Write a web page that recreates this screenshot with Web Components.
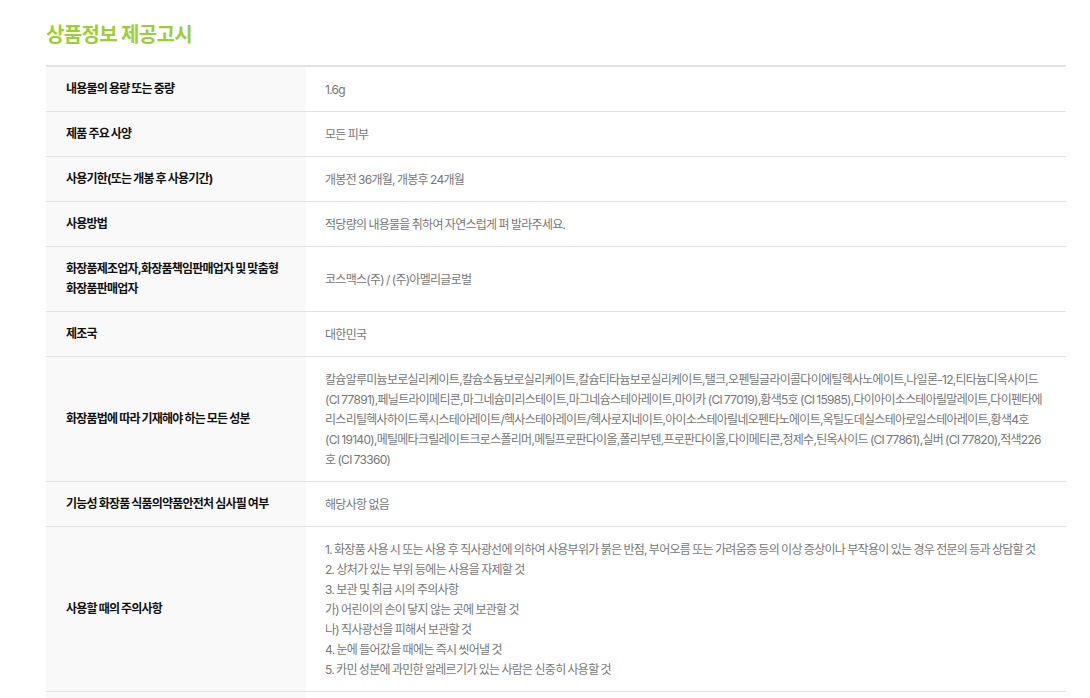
<!DOCTYPE html>
<html lang="ko">
<head>
<meta charset="utf-8">
<title>상품정보 제공고시</title>
<style>
  html, body{ margin: 0; height: 698px; overflow: hidden; background: #fff; }
  body{ font-family: Inter, "Noto Sans CJK KR", sans-serif; }
</style>
</head>
<body>
<notice-section heading="상품정보 제공고시">
  <notice-row label="내용물의 용량 또는 중량">1.6g</notice-row>
  <notice-row label="제품 주요 사양">모든 피부</notice-row>
  <notice-row label="사용기한(또는 개봉 후 사용기간)">개봉전 36개월, 개봉후 24개월</notice-row>
  <notice-row label="사용방법">적당량의 내용물을 취하여 자연스럽게 펴 발라주세요.</notice-row>
  <notice-row label="화장품제조업자,화장품책임판매업자 및 맞춤형 화장품판매업자">코스맥스(주) / (주)아멜리글로벌</notice-row>
  <notice-row label="제조국">대한민국</notice-row>
  <notice-row label="화장품법에 따라 기재해야 하는 모든 성분">칼슘알루미늄보로실리케이트,칼슘소듐보로실리케이트,칼슘티타늄보로실리케이트,탤크,오펜틸글라이콜다이에틸헥사노에이트,나일론-12,티타늄디옥사이드<br>(CI 77891),페닐트라이메티콘,마그네슘미리스테이트,마그네슘스테아레이트,마이카 (CI 77019),황색5호 (CI 15985),다이아이소스테아릴말레이트,다이펜타에<br>리스리틸헥사하이드록시스테아레이트/헥사스테아레이트/헥사로지네이트,아이소스테아릴네오펜타노에이트,옥틸도데실스테아로일스테아레이트,황색4호<br>(CI 19140),메틸메타크릴레이트크로스폴리머,메틸프로판다이올,폴리부텐,프로판다이올,다이메티콘,정제수,틴옥사이드 (CI 77861),실버 (CI 77820),적색226<br>호 (CI 73360)</notice-row>
  <notice-row label="기능성 화장품 식품의약품안전처 심사필 여부">해당사항 없음</notice-row>
  <notice-row label="사용할 때의 주의사항">1. 화장품 사용 시 또는 사용 후 직사광선에 의하여 사용부위가 붉은 반점, 부어오름 또는 가려움증 등의 이상 증상이나 부작용이 있는 경우 전문의 등과 상담할 것<br>2. 상처가 있는 부위 등에는 사용을 자제할 것<br>3. 보관 및 취급 시의 주의사항<br>가) 어린이의 손이 닿지 않는 곳에 보관할 것<br>나) 직사광선을 피해서 보관할 것<br>4. 눈에 들어갔을 때에는 즉시 씻어낼 것<br>5. 카민 성분에 과민한 알레르기가 있는 사람은 신중히 사용할 것</notice-row>
  <notice-row></notice-row>
</notice-section>

<script>
class noticeSection extends HTMLElement {
  constructor(){
    super()
    const shadowRoot = this.attachShadow({mode: 'open'})
    shadowRoot.innerHTML = `
      <style>
        :host{
          display: block;
          padding: 0 24px 0 46px;
        }
        h2{
          margin: 0;
          padding-top: 21px;
          height: 65px;
          box-sizing: border-box;
          font-size: 20px;
          line-height: 28px;
          font-weight: 700;
          letter-spacing: -0.65px;
          color: #9bcf36;
        }
        .list{
          border-top: 2px solid #e2e2e2;
        }
      </style>
      <h2></h2>
      <div class="list"><slot></slot></div>
    `
    shadowRoot.querySelector('h2').textContent = this.getAttribute('heading')
  }
}

class noticeRow extends HTMLElement {
  constructor(){
    super()
    const shadowRoot = this.attachShadow({mode: 'open'})
    shadowRoot.innerHTML = `
      <style>
        :host{
          display: grid;
          grid-template-columns: 260px 1fr;
          min-height: 44px;
          border-bottom: 1px solid #e2e2e2;
          font-size: 12px;
          line-height: 20px;
        }
        .label{
          display: flex;
          align-items: center;
          padding: 12px 20px;
          background: #f9f9f9;
          color: #111;
          font-weight: 700;
          letter-spacing: -0.78px;
          word-spacing: -0.2px;
        }
        .value{
          align-self: center;
          padding: 13px 0 11px 19px;
          color: #777;
          letter-spacing: -0.72px;
          word-spacing: -0.55px;
          white-space: nowrap;
        }
      </style>
      <div class="label"></div>
      <div class="value"><slot></slot></div>
    `
    shadowRoot.querySelector('.label').textContent = this.getAttribute('label')
  }
}

window.customElements.define('notice-section', noticeSection)
window.customElements.define('notice-row', noticeRow)
</script>
</body>
</html>
